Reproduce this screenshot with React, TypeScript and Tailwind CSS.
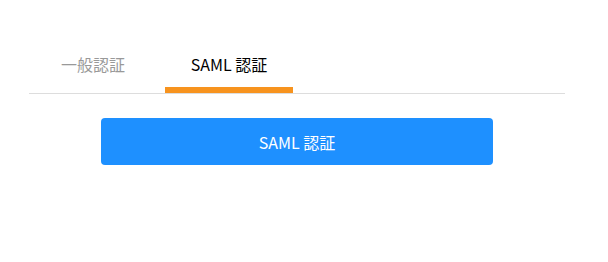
import { useState } from "react";

const tabs = ["一般認証", "SAML 認証"];

export default function App() {
  const [active, setActive] = useState(1);

  return (
    <div
      className="min-h-screen bg-white"
      style={{ fontFamily: '"Noto Sans CJK JP", "Noto Sans", sans-serif' }}
    >
      <div className="mx-[29px] w-[536px] pt-10">
        {/* Tabs */}
        <div className="flex gap-2 border-b border-[#dddddd]">
          {tabs.map((label, i) => (
            <button
              key={label}
              onClick={() => setActive(i)}
              className="flex w-32 flex-col"
            >
              <span
                className={`flex h-[47px] items-center justify-center text-[16px] ${
                  active === i ? "text-black" : "text-[#999999]"
                }`}
              >
                {label}
              </span>
              <span
                className={`h-[6px] w-full ${
                  active === i ? "bg-[#f7931e]" : "bg-transparent"
                }`}
              />
            </button>
          ))}
        </div>

        {/* Action */}
        <div className="mt-6 flex justify-center">
          <button className="h-[47px] w-[392px] rounded bg-[#1e90ff] text-[16px] text-white">
            SAML 認証
          </button>
        </div>
      </div>
    </div>
  );
}
